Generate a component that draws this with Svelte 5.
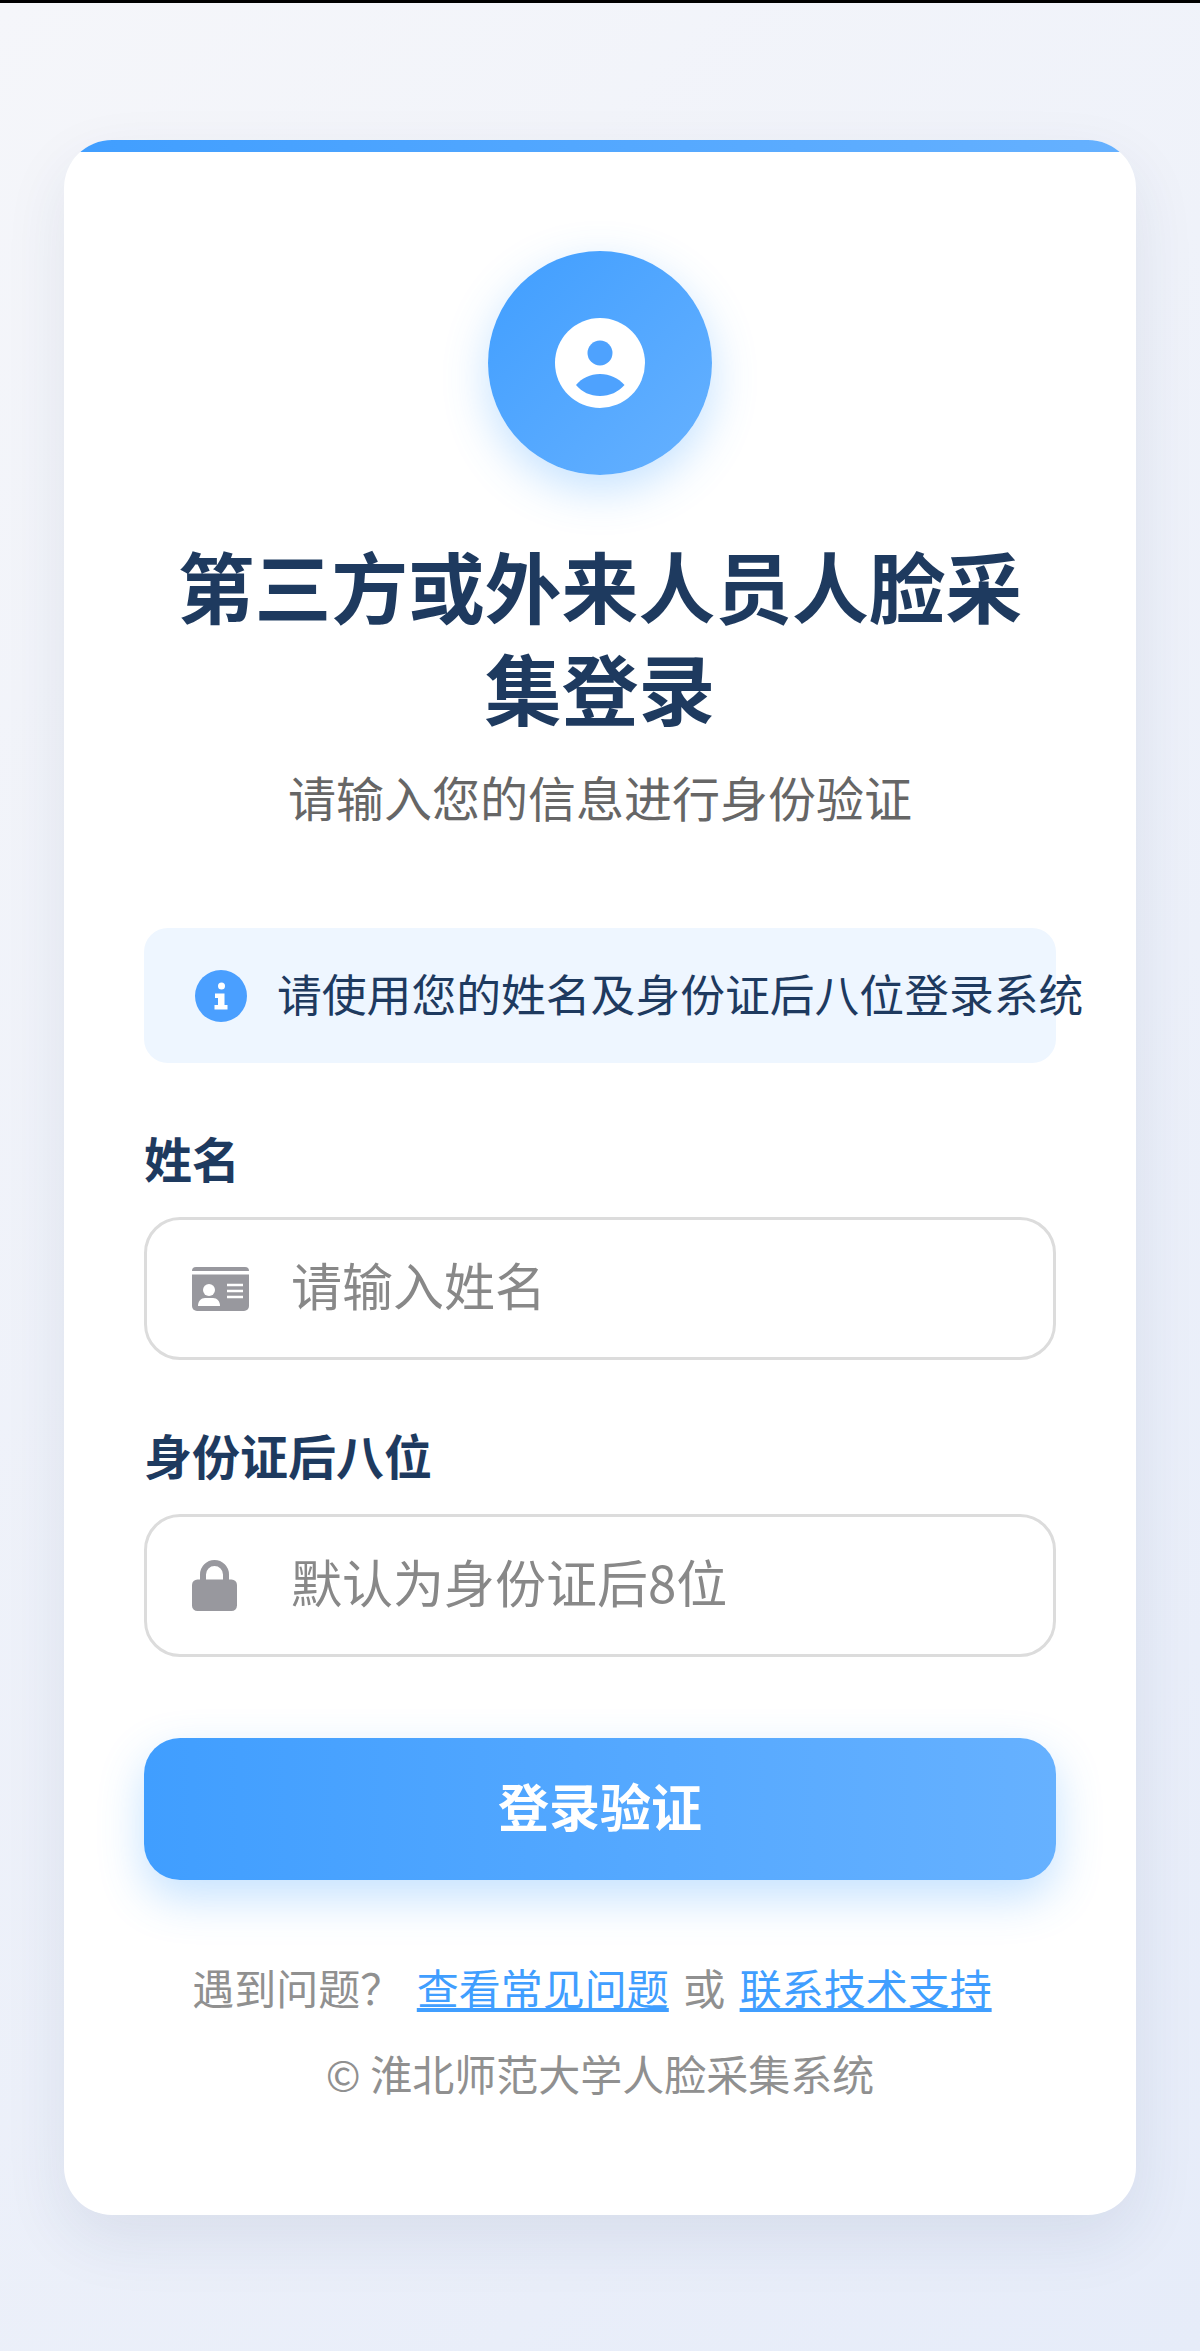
<script>
  let name = $state('');
  let idTail = $state('');
</script>

<div class="statusline"></div>
<main class="page">
  <section class="card">
    <div class="avatar">
      <svg width="90" height="90" viewBox="0 0 90 90" aria-hidden="true">
        <circle cx="45" cy="45" r="45" fill="#fff" />
        <circle cx="45" cy="35" r="12.500" fill="#4ea2fe" />
        <path d="M21 67C27 60 35 56 45 56C55 56 63 60 69.500 67C63 74 55 78 45 78C35 78 27 74 21 67Z" fill="#4ea2fe" />
      </svg>
    </div>
    <h1>第三方或外来人员人脸采集登录</h1>
    <p class="subtitle">请输入您的信息进行身份验证</p>

    <div class="notice">
      <svg width="52" height="52" viewBox="0 0 52 52" aria-hidden="true">
        <circle cx="26" cy="26" r="26" fill="#4a9fff" />
        <circle cx="26.500" cy="16" r="3.500" fill="#fff" />
        <path d="M20 23.500h9.500v11.500h3v4.500h-13v-4.500h3.500v-7h-3z" fill="#fff" />
      </svg>
      <span>请使用您的姓名及身份证后八位登录系统</span>
    </div>

    <div class="field">
      <label for="name">姓名</label>
      <div class="input-box">
        <svg class="icon" width="57" height="44" viewBox="0 0 57 44" aria-hidden="true">
          <path d="M0 4a4 4 0 0 1 4-4h49a4 4 0 0 1 4 4z" fill="#98989e" />
          <path d="M0 7.500h57V39a5 5 0 0 1-5 5H5a5 5 0 0 1-5-5z" fill="#98989e" />
          <circle cx="17" cy="23" r="6" fill="#fff" />
          <path d="M6 39c0-5 3-8 7-8h8c4 0 7 3 7 8z" fill="#fff" />
          <path d="M35 18h16M35 24h16M35 30h16" stroke="#fff" stroke-width="2.500" />
        </svg>
        <input id="name" bind:value={name} placeholder="请输入姓名" />
      </div>
    </div>

    <div class="field">
      <label for="tail">身份证后八位</label>
      <div class="input-box">
        <svg class="icon" width="57" height="51" viewBox="0 0 57 51" aria-hidden="true">
          <path d="M11 22v-7.500a11.500 11.500 0 0 1 23 0V22" fill="none" stroke="#98989e" stroke-width="6" />
          <rect x="0" y="19.500" width="45" height="31.500" rx="5.500" fill="#98989e" />
        </svg>
        <input id="tail" bind:value={idTail} placeholder="默认为身份证后8位" />
      </div>
    </div>

    <button type="button" class="submit">登录验证</button>

    <p class="help">遇到问题&#65311; <a href="#faq">查看常见问题</a> 或 <a href="#support">联系技术支持</a></p>
    <p class="copyright">© 淮北师范大学人脸采集系统</p>
  </section>
</main>

<style>
  :global(body) {
    margin: 0;
    font-family: "Noto Sans CJK SC", "Noto Sans", sans-serif;
  }

  .statusline {
    height: 3px;
    background: #000;
  }

  .page {
    box-sizing: border-box;
    min-height: 2348px;
    padding: 137px 64px 0;
    background: linear-gradient(135deg, #f5f6fa 0%, #e6ecf9 100%);
  }

  .card {
    position: relative;
    box-sizing: border-box;
    height: 2075px;
    padding: 111px 80px 0;
    overflow: hidden;
    border-radius: 48px;
    background: #fff;
    box-shadow: 0 24px 64px rgba(30, 50, 100, 0.09);
  }

  .card::before {
    content: '';
    position: absolute;
    top: 0;
    left: 0;
    right: 0;
    height: 12px;
    background: linear-gradient(90deg, #409eff, #66b1ff);
  }

  .avatar {
    display: flex;
    align-items: center;
    justify-content: center;
    width: 224px;
    height: 224px;
    margin: 0 auto;
    border-radius: 50%;
    background: linear-gradient(135deg, #409eff, #66b1ff);
    box-shadow: 0 15px 45px rgba(64, 158, 255, 0.3);
  }

  h1 {
    margin: 59px 0 0;
    color: #1e3a5f;
    font-size: 76.800px;
    font-weight: 700;
    line-height: 102px;
    text-align: center;
  }

  .subtitle {
    margin: 22px 0 0;
    color: #666;
    font-size: 48px;
    line-height: 72px;
    text-align: center;
  }

  .notice {
    display: flex;
    align-items: center;
    gap: 30px;
    box-sizing: border-box;
    height: 135px;
    margin-top: 96px;
    padding: 0 0 0 51px;
    border-radius: 24px;
    background: #eef6ff;
    color: #1e3a5f;
    font-size: 44.800px;
    white-space: nowrap;
  }

  .notice svg {
    flex-shrink: 0;
  }

  .notice span {
    padding-bottom: 6px;
  }

  .field {
    margin-top: 62px;
  }

  label {
    display: block;
    margin-bottom: 28px;
    color: #1e3a5f;
    font-size: 48px;
    font-weight: 700;
    line-height: 64px;
  }

  .input-box {
    display: flex;
    align-items: center;
    box-sizing: border-box;
    height: 143px;
    padding-left: 45px;
    border: 3px solid #dcdcdc;
    border-radius: 36px;
    background: #fff;
  }

  .icon {
    flex-shrink: 0;
    margin-right: 42px;
  }

  input {
    flex: 1;
    min-width: 0;
    padding: 0 0 9px;
    border: 0;
    outline: 0;
    background: transparent;
    color: #333;
    font-family: inherit;
    font-size: 51px;
  }

  input::placeholder {
    color: #888;
    opacity: 1;
  }

  .submit {
    display: block;
    width: 100%;
    height: 142px;
    margin-top: 81px;
    padding: 0 0 9px;
    border: 0;
    border-radius: 36px;
    background: linear-gradient(90deg, #409eff, #66b1ff);
    box-shadow: 0 18px 45px rgba(64, 158, 255, 0.3);
    color: #fff;
    font-family: inherit;
    font-size: 51px;
    font-weight: 700;
  }

  .help,
  .copyright {
    color: #909090;
    font-size: 42px;
    line-height: 60px;
    text-align: center;
  }

  .help {
    margin: 77px 0 0;
    padding-right: 11px;
  }

  .help a {
    margin: 0 5px;
    color: #409eff;
    text-decoration: underline;
  }

  .copyright {
    margin: 26px 0 0;
  }
</style>
